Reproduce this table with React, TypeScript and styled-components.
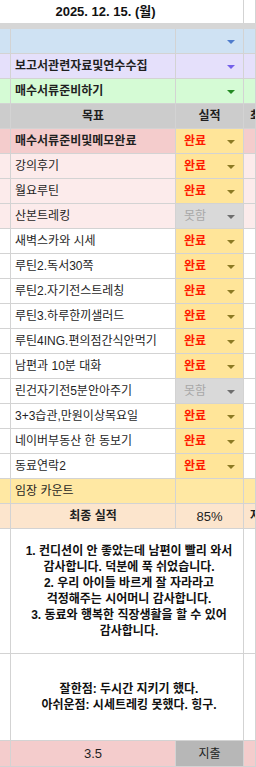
import React from "react";
import styled, { createGlobalStyle } from "styled-components";

const Global = createGlobalStyle`
  html, body { margin: 0; padding: 0; background: #ffffff; }
  body {
    font-family: "Liberation Sans", "Noto Sans CJK KR", sans-serif;
    color: #1f1f1f;
    -webkit-font-smoothing: antialiased;
  }
`;

const LINE = "#d3d3d3";

const Sheet = styled.div`
  width: 256px;
  height: 767px;
  overflow: hidden;
  display: flex;
  flex-direction: column;
`;

const Row = styled.div<{ $h: number }>`
  display: grid;
  grid-template-columns: 11px 165px 68px 12px;
  height: ${(p) => p.$h}px;
  flex: none;
`;

const Band = styled.div`
  height: 6px;
  background: #d6d6d6;
  flex: none;
`;

const Cell = styled.div<{
  $bg?: string;
  $span?: number;
  $align?: "left" | "center";
  $bold?: boolean;
  $size?: number;
  $noBottom?: boolean;
}>`
  box-sizing: border-box;
  grid-column: span ${(p) => p.$span ?? 1};
  background: ${(p) => p.$bg ?? "#ffffff"};
  border-right: 1px solid ${LINE};
  border-bottom: ${(p) => (p.$noBottom ? "none" : `1px solid ${LINE}`)};
  display: flex;
  align-items: center;
  justify-content: ${(p) => (p.$align === "center" ? "center" : "flex-start")};
  padding: ${(p) => (p.$align === "center" ? "0" : "0 0 0 4px")};
  font-size: ${(p) => p.$size ?? 12}px;
  font-weight: ${(p) => (p.$bold ? 700 : 400)};
  line-height: 1;
  white-space: nowrap;
  overflow: hidden;
  min-width: 0;
`;

const DateCell = styled(Cell)`
  padding: 0 32px 0 0;
  justify-content: center;
  font-size: 13px;
  font-weight: 700;
  color: #111;
`;

const Clip = styled(Cell)`
  padding: 0 0 0 6px;
  font-weight: 700;
`;

const Status = styled.div<{ $bg: string; $color: string; $bold: boolean }>`
  box-sizing: border-box;
  background: ${(p) => p.$bg};
  border-right: 1px solid ${LINE};
  border-bottom: 1px solid ${LINE};
  display: flex;
  align-items: center;
  justify-content: space-between;
  padding: 0 8px 0 8px;
  font-size: 12px;
  font-weight: ${(p) => (p.$bold ? 700 : 400)};
  color: ${(p) => p.$color};
  line-height: 1;
  white-space: nowrap;
`;

const Arrow = styled.span<{ $color: string }>`
  width: 0;
  height: 0;
  border-left: 4px solid transparent;
  border-right: 4px solid transparent;
  border-top: 4px solid ${(p) => p.$color};
  margin-left: auto;
  margin-top: 1px;
`;

const Notes = styled(Cell)`
  flex-direction: column;
  justify-content: center;
  align-items: center;
  text-align: center;
  line-height: 16px;
  font-weight: 700;
  font-size: 12px;
  color: #111;
`;

const NoteLine = styled.div`
  white-space: nowrap;
`;

type Tone = "done" | "miss";

const tasks: { name: string; bg: string; status: Tone; bold?: boolean }[] = [
  { name: "매수서류준비및메모완료", bg: "#f4cccc", status: "done", bold: true },
  { name: "강의후기", bg: "#fcebeb", status: "done" },
  { name: "월요루틴", bg: "#fcebeb", status: "done" },
  { name: "산본트레킹", bg: "#fcebeb", status: "miss" },
  { name: "새벽스카와 시세", bg: "#ffffff", status: "done" },
  { name: "루틴2.독서30쪽", bg: "#ffffff", status: "done" },
  { name: "루틴2.자기전스트레칭", bg: "#ffffff", status: "done" },
  { name: "루틴3.하루한끼샐러드", bg: "#ffffff", status: "done" },
  { name: "루틴4ING.편의점간식안먹기", bg: "#ffffff", status: "done" },
  { name: "남편과 10분 대화", bg: "#ffffff", status: "done" },
  { name: "린건자기전5분안아주기", bg: "#ffffff", status: "miss" },
  { name: "3+3습관,만원이상목요일", bg: "#ffffff", status: "done" },
  { name: "네이버부동산 한 동보기", bg: "#ffffff", status: "done" },
  { name: "동료연락2", bg: "#ffffff", status: "done" },
];

const categories = [
  { label: "", bg: "#cfe2f3", arrow: "#4f7ccc" },
  { label: "보고서관련자료및연수수집", bg: "#e5e0fb", arrow: "#7460ea" },
  { label: "매수서류준비하기", bg: "#d5fbd5", arrow: "#238a23" },
];

export default function App() {
  return (
    <>
      <Global />
      <Sheet>
        <Row $h={23}>
          <DateCell $span={3} $noBottom>
            2025. 12. 15. (월)
          </DateCell>
          <Cell $noBottom />
        </Row>
        <Band />
        {categories.map((c, i) => (
          <Row $h={25} key={i}>
            <Cell $bg={c.bg} />
            <Cell $bg={c.bg} $bold>
              {c.label}
            </Cell>
            <Status $bg={c.bg} $color="#111" $bold={false}>
              <Arrow $color={c.arrow} />
            </Status>
            <Cell $bg={c.bg} />
          </Row>
        ))}
        <Row $h={25}>
          <Cell $bg="#cccccc" />
          <Cell $bg="#cccccc" $align="center" $bold>
            목표
          </Cell>
          <Cell $bg="#cccccc" $align="center" $bold>
            실적
          </Cell>
          <Clip $bg="#cccccc">최</Clip>
        </Row>
        {tasks.map((t) => (
          <Row $h={25} key={t.name}>
            <Cell $bg={t.bg} />
            <Cell $bg={t.bg} $bold={t.bold}>
              {t.name}
            </Cell>
            {t.status === "done" ? (
              <Status $bg="#ffe599" $color="#ff1a00" $bold>
                완료
                <Arrow $color="#8c7a24" />
              </Status>
            ) : (
              <Status $bg="#d9d9d9" $color="#a8a8a8" $bold={false}>
                못함
                <Arrow $color="#6e6e6e" />
              </Status>
            )}
            <Cell $bg={t.bg} />
          </Row>
        ))}
        <Row $h={25}>
          <Cell $bg="#ffe8a3" />
          <Cell $bg="#ffe8a3">임장 카운트</Cell>
          <Cell $bg="#ffe8a3" />
          <Cell $bg="#ffe8a3" />
        </Row>
        <Row $h={25}>
          <Cell $bg="#fce5cd" />
          <Cell $bg="#fce5cd" $align="center" $bold>
            최종 실적
          </Cell>
          <Cell $bg="#fce5cd" $align="center" $size={13}>
            85%
          </Cell>
          <Clip $bg="#fce5cd">자</Clip>
        </Row>
        <Row $h={125}>
          <Cell />
          <Notes $span={2}>
            <NoteLine>1. 컨디션이 안 좋았는데 남편이 빨리 와서</NoteLine>
            <NoteLine>감사합니다. 덕분에 푹 쉬었습니다.</NoteLine>
            <NoteLine>2. 우리 아이들 바르게 잘 자라라고</NoteLine>
            <NoteLine>걱정해주는 시어머니 감사합니다.</NoteLine>
            <NoteLine>3. 동료와 행복한 직장생활을 할 수 있어</NoteLine>
            <NoteLine>감사합니다.</NoteLine>
          </Notes>
          <Cell />
        </Row>
        <Row $h={87}>
          <Cell />
          <Notes $span={2}>
            <NoteLine>잘한점: 두시간 지키기 했다.</NoteLine>
            <NoteLine>아쉬운점: 시세트레킹 못했다. 힝구.</NoteLine>
          </Notes>
          <Cell />
        </Row>
        <Row $h={26}>
          <Cell $bg="#f4cccc" />
          <Cell $bg="#f4cccc" $align="center" $size={13}>
            3.5
          </Cell>
          <Cell $bg="#b7b7b7" $align="center">
            지출
          </Cell>
          <Cell $bg="#f4cccc" />
        </Row>
      </Sheet>
    </>
  );
}
